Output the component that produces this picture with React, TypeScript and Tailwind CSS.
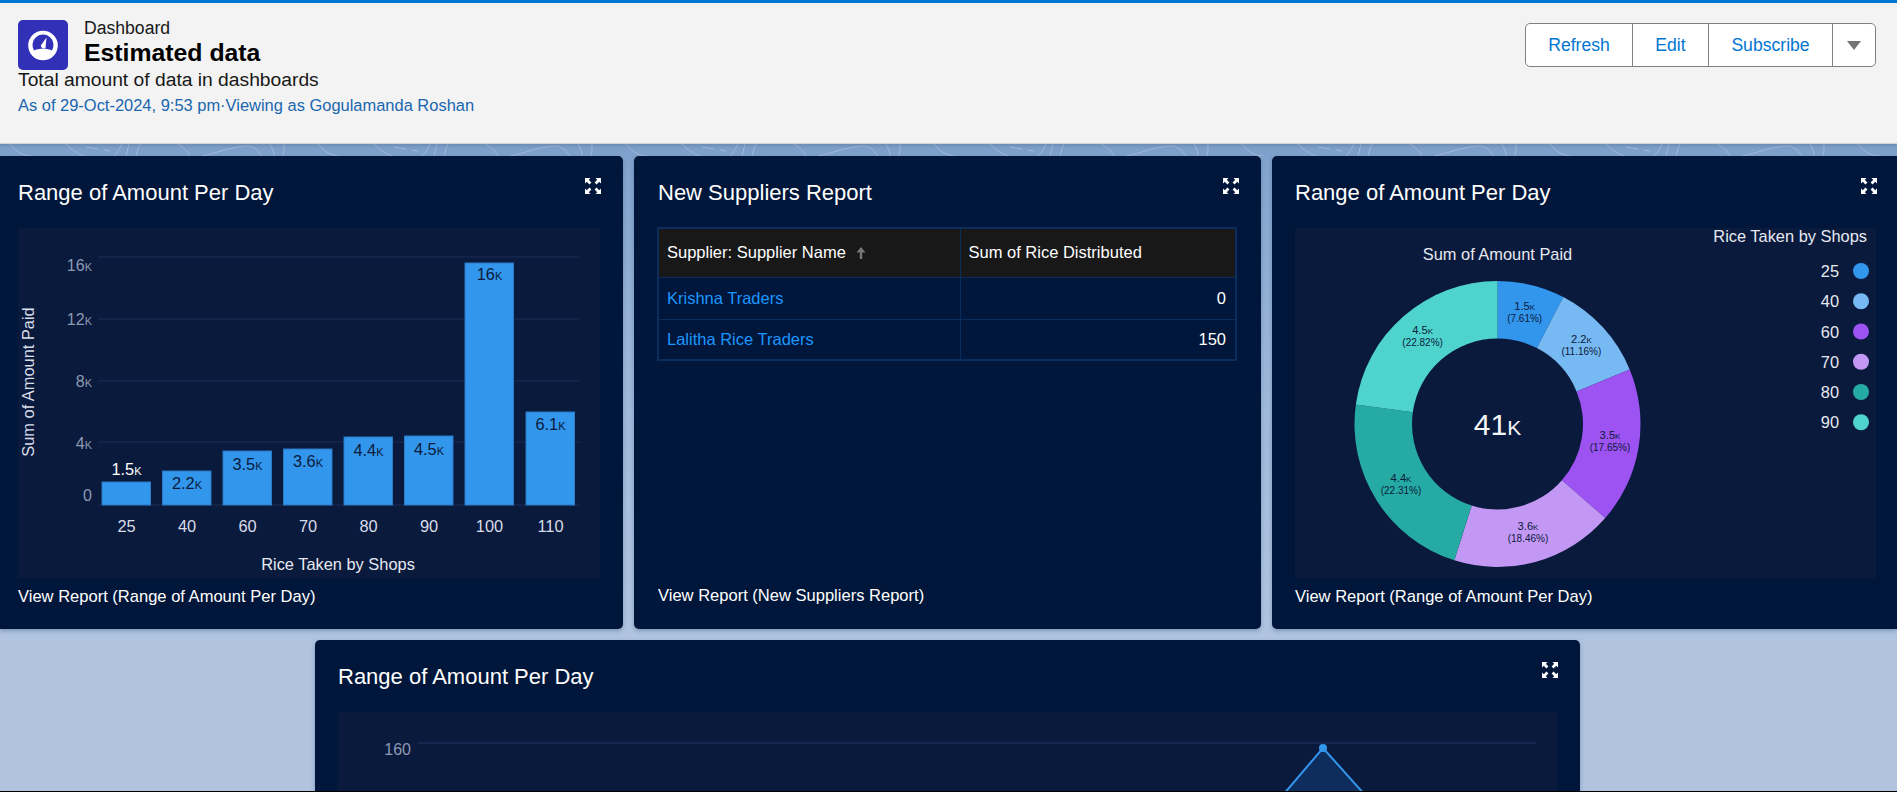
import React from "react";

const bars = [
  { name: "25", x: 102, top: 482, value: "1.5k", labelY: 469, outside: true },
  { name: "40", x: 162.5, top: 471, value: "2.2k", labelY: 483 },
  { name: "60", x: 223, top: 451, value: "3.5k", labelY: 464 },
  { name: "70", x: 283.5, top: 449, value: "3.6k", labelY: 461 },
  { name: "80", x: 344, top: 437, value: "4.4k", labelY: 450 },
  { name: "90", x: 404.5, top: 436, value: "4.5k", labelY: 449 },
  { name: "100", x: 465, top: 263, value: "16k", labelY: 274 },
  { name: "110", x: 526, top: 412, value: "6.1k", labelY: 424 },
];

const yTicks = [
  { label: "16k", line: 257, y: 265 },
  { label: "12k", line: 319, y: 319 },
  { label: "8k", line: 381, y: 381 },
  { label: "4k", line: 442, y: 443 },
  { label: "0", line: 505, y: 495 },
];

const slices = [
  { name: "25", pct: 7.61, color: "#3296ed", value: "1.5k", share: "(7.61%)", x: 1524.7, y: 306 },
  { name: "40", pct: 11.16, color: "#77b9f2", value: "2.2k", share: "(11.16%)", x: 1581.4, y: 339 },
  { name: "60", pct: 17.65, color: "#9d53f2", value: "3.5k", share: "(17.65%)", x: 1610, y: 435 },
  { name: "70", pct: 18.46, color: "#c398f5", value: "3.6k", share: "(18.46%)", x: 1528, y: 526 },
  { name: "80", pct: 22.31, color: "#26aba4", value: "4.4k", share: "(22.31%)", x: 1401, y: 478 },
  { name: "90", pct: 22.82, color: "#4ed4cd", value: "4.5k", share: "(22.82%)", x: 1422.6, y: 330 },
];

const CX = 1497.5;
const CY = 424;

const arcPath = (from: number, to: number, outer: number, inner: number) => {
  const point = (pct: number, r: number) => {
    const a = (pct / 100) * Math.PI * 2;
    return `${CX + Math.sin(a) * r} ${CY - Math.cos(a) * r}`;
  };
  const big = to - from > 50 ? 1 : 0;
  return `M${point(from, outer)} A${outer} ${outer} 0 ${big} 1 ${point(to, outer)} L${point(to, inner)} A${inner} ${inner} 0 ${big} 0 ${point(from, inner)} Z`;
};

const ExpandIcon = () => (
  <svg viewBox="0 0 16 16" className="w-4 h-4" fill="#fff">
    <path d="M0 0h5.5L3.8 1.8l2.6 2.6-2 2-2.6-2.6L0 5.5z" />
    <path d="M16 0v5.5l-1.8-1.7-2.6 2.6-2-2 2.6-2.6L10.5 0z" />
    <path d="M0 16v-5.5l1.8 1.7 2.6-2.6 2 2-2.6 2.6L5.5 16z" />
    <path d="M16 16h-5.5l1.7-1.8-2.6-2.6 2-2 2.6 2.600 1.800-1.700z" />
  </svg>
);

const Card = ({
  title,
  footer,
  className,
  children,
}: {
  title: string;
  footer?: string;
  className: string;
  children: React.ReactNode;
}) => (
  <section className={`flex flex-col shrink-0 bg-[#00163a] text-white shadow-[0_2px_4px_rgba(40,70,120,0.35)] ${className}`}>
    <div className="h-[72px] shrink-0 flex items-start justify-between">
      <h2 className="text-[22px] leading-[26px] mt-6">{title}</h2>
      <button className="mt-[22px] -mr-px">
        <ExpandIcon />
      </button>
    </div>
    {children}
    {footer && <p className="mt-[9px] text-[16.55px] leading-5">{footer}</p>}
  </section>
);

const BarChart = () => (
  <div className="h-[350px] bg-[#0a1a3d]">
    <svg viewBox="18 228 582 350" className="w-full h-full block font-['Liberation_Sans',sans-serif]">
      {yTicks.map((t) => (
        <g key={t.label}>
          <line x1="98" x2="579" y1={t.line} y2={t.line} stroke="#1b2b55" strokeWidth="1.2" />
          <text x="92" y={t.y + 5.5} textAnchor="end" fontSize="16" fill="#8d99b2" className="[font-variant:small-caps]">
            {t.label}
          </text>
        </g>
      ))}
      {bars.map((b) => (
        <g key={b.name}>
          <rect x={b.x} y={b.top} width="48.5" height={505 - b.top} fill="#3296ed" stroke="#2a79c4" strokeWidth="1" />
          <text
            x={b.x + 24.5}
            y={b.labelY + 5.5}
            textAnchor="middle"
            fontSize="16.4"
            fill={b.outside ? "#ffffff" : "#0b1a3a"}
            className="[font-variant:small-caps]"
          >
            {b.value}
          </text>
          <text x={b.x + 24.5} y="532" textAnchor="middle" fontSize="16.4" fill="#d8dde8">
            {b.name}
          </text>
        </g>
      ))}
      <text x="338" y="570" textAnchor="middle" fontSize="16.4" fill="#e6e9f0">
        Rice Taken by Shops
      </text>
      <text transform="translate(34 382) rotate(-90)" textAnchor="middle" fontSize="16.4" fill="#d8dde8">
        Sum of Amount Paid
      </text>
    </svg>
  </div>
);

const SupplierTable = () => (
  <div className="h-[350px] -mt-px">
    <table className="table-fixed border-collapse w-[580px] -ml-px text-[16.5px] border-2 border-[#0a2d5c]">
      <colgroup>
        <col className="w-[302px]" />
        <col />
      </colgroup>
      <thead>
        <tr className="h-[49px] bg-[#181818] text-left">
          <th className="font-normal px-[8px] border border-[#0a2d5c]">
            <span className="inline-flex items-center gap-[10px]">
              Supplier: Supplier Name
              <svg viewBox="0 0 10 14" className="w-[10px] h-[14px]" fill="#777">
                <path d="M5 1l4.500 5.500H6.200V13H3.800V6.500H0.500z" />
              </svg>
            </span>
          </th>
          <th className="font-normal px-[8px] border border-[#0a2d5c]">Sum of Rice Distributed</th>
        </tr>
      </thead>
      <tbody>
        <tr className="h-[42px]">
          <td className="px-[8px] text-[#1b96ff] border border-[#0a2d5c]">Krishna Traders</td>
          <td className="px-[9px] text-right border border-[#0a2d5c]">0</td>
        </tr>
        <tr className="h-[41px]">
          <td className="px-[8px] text-[#1b96ff] border border-[#0a2d5c]">Lalitha Rice Traders</td>
          <td className="px-[9px] text-right border border-[#0a2d5c]">150</td>
        </tr>
      </tbody>
    </table>
  </div>
);

const DonutChart = () => {
  let start = 0;
  return (
    <div className="h-[350px] bg-[#0a1a3d]">
      <svg viewBox="1295 228 581 350" className="w-full h-full block font-['Liberation_Sans',sans-serif]">
        <text x={CX} y="260" textAnchor="middle" fontSize="16.4" fill="#e6e9f0">
          Sum of Amount Paid
        </text>
        {slices.map((s) => {
          const d = arcPath(start, start + s.pct, 143, 85.5);
          start += s.pct;
          return <path key={s.name} d={d} fill={s.color} />;
        })}
        {slices.map((s) => (
          <g key={s.name} textAnchor="middle" fill="#0b1a3a">
            <text x={s.x} y={s.y + 4} fontSize="11.2" className="[font-variant:small-caps]">
              {s.value}
            </text>
            <text x={s.x} y={s.y + 16} fontSize="10">
              {s.share}
            </text>
          </g>
        ))}
        <text x={CX} y="435" textAnchor="middle" fontSize="30" fill="#f2f4f8" className="[font-variant:small-caps]">
          41k
        </text>
        <text x="1867" y="242" textAnchor="end" fontSize="16.4" fill="#e6e9f0">
          Rice Taken by Shops
        </text>
        {slices.map((s, i) => {
          const y = 271 + i * 30.25;
          return (
            <g key={s.name}>
              <text x="1839" y={y + 6} textAnchor="end" fontSize="16.4" fill="#e6e9f0">
                {s.name}
              </text>
              <circle cx="1861" cy={y} r="8" fill={s.color} />
            </g>
          );
        })}
      </svg>
    </div>
  );
};

const LineChart = () => (
  <div className="flex-1 bg-[#0a1a3d]">
    <svg viewBox="338 712 1219 79" className="w-full h-[79px] block font-['Liberation_Sans',sans-serif]">
      <line x1="418" x2="1536" y1="743" y2="743" stroke="#1b2b55" strokeWidth="1.5" />
      <text x="411" y="755" textAnchor="end" fontSize="16" fill="#8d99b2">
        160
      </text>
      <path d="M1283 795L1323 748L1365 795Z" fill="#0f2d5c" />
      <path d="M1283 795L1323 748L1365 795" fill="none" stroke="#3296ed" strokeWidth="2" />
      <circle cx="1323" cy="748" r="4" fill="#3296ed" />
    </svg>
  </div>
);

const BackgroundPattern = () => (
  <svg className="absolute left-0 top-[144px] w-full h-3" aria-hidden="true">
    <defs>
      <pattern id="swirl" width="308" height="12" patternUnits="userSpaceOnUse">
        <g fill="none" stroke="#b9cce4" strokeOpacity="0.55" strokeWidth="1">
          <path d="M10 0C16 8 24 12 32 12" />
          <path d="M66 0C72 6 78 10 84 12" />
          <path d="M86 3l12 2M104 6l6 1" />
          <path d="M114 12C118 8 120 4 122 0" />
          <path d="M126 12C127 8 128 4 129 0" />
          <path d="M136 12C137 8 138 4 140 0" />
          <path d="M178 0C184 4 188 8 190 12" />
          <path d="M202 12C214 10 226 4 246 2C254 2 258 6 262 12" />
          <path d="M270 0C272 4 274 8 274 12" />
          <path d="M284 0C284 4 284 8 283 12" />
        </g>
      </pattern>
    </defs>
    <rect width="100%" height="100%" fill="url(#swirl)" />
  </svg>
);

const App = () => (
  <div className="relative h-[792px] w-full overflow-hidden flex flex-col bg-[linear-gradient(#7a9ec9_140px,#84a5ce_170px,#a0b9da_400px,#b0c4df_620px)] font-['Liberation_Sans',Arial,sans-serif]">
    <div className="h-[144px] shrink-0 relative z-10 bg-[#f3f3f3] border-t-[3px] border-[#0176d3] border-b border-b-[#d8d3cd] shadow-[0_2px_3px_rgba(0,0,0,0.12)] flex justify-between pl-[18px] pr-[21px]">
      <div>
        <div className="flex items-start gap-4 mt-[17px] h-[50px]">
          <svg viewBox="0 0 50 50" className="w-[50px] h-[50px] shrink-0">
            <rect width="50" height="50" rx="5" fill="#3230b6" />
            <circle cx="25" cy="25.5" r="14.8" fill="#fff" />
            <path d="M16 30.5A10.500 10.500 0 1 1 34 30.5C30 28 20 28 16 30.5Z" fill="#3230b6" />
            <path d="M28.5 17.5L22.800 25.500A3 3 0 0 0 27.500 28Z" fill="#fff" />
          </svg>
          <div className="-mt-[3px]">
            <p className="text-[17.6px] leading-[22px] text-[#181818]">Dashboard</p>
            <h1 className="text-[24.8px] leading-[28px] font-bold text-black">Estimated data</h1>
          </div>
        </div>
        <p className="-mt-[2px] text-[19.25px] leading-6 text-[#181818]">Total amount of data in dashboards</p>
        <p className="text-[16.47px] leading-5 mt-[3px] text-[#1a66b0]">As of 29-Oct-2024, 9:53 pm·Viewing as Gogulamanda Roshan</p>
      </div>
      <div className="mt-5 h-[44px] flex bg-white border border-[#808080] rounded-[5px] text-[17.6px] text-[#0176d3]">
        <button className="w-[107px] border-r border-[#808080]">Refresh</button>
        <button className="w-[76px] border-r border-[#808080]">Edit</button>
        <button className="w-[124px] border-r border-[#808080]">Subscribe</button>
        <button className="w-[42px] flex items-center justify-center">
          <svg viewBox="0 0 14 9" className="w-[14px] h-[9px]" fill="#747474">
            <path d="M0 0h14L7 9z" />
          </svg>
        </button>
      </div>
    </div>

    <BackgroundPattern />

    <div className="relative flex-1 min-h-0 overflow-hidden pt-3 flex flex-col gap-[11px]">
      <div className="flex gap-[11px]">
        <Card title="Range of Amount Per Day" footer="View Report (Range of Amount Per Day)" className="w-[623px] h-[473px] pl-[18px] pr-[23px] rounded-r-[5px]">
          <BarChart />
        </Card>
        <Card title="New Suppliers Report" footer="View Report (New Suppliers Report)" className="w-[627px] h-[473px] pl-6 pr-[23px] rounded-[5px]">
          <SupplierTable />
        </Card>
        <Card title="Range of Amount Per Day" footer="View Report (Range of Amount Per Day)" className="w-[625px] h-[473px] pl-[23px] pr-[21px] rounded-l-[5px]">
          <DonutChart />
        </Card>
      </div>
      <div className="ml-[315px]">
        <Card title="Range of Amount Per Day" className="w-[1265px] h-[300px] pl-[23px] pr-[23px] rounded-[5px]">
          <LineChart />
        </Card>
      </div>
    </div>
    <div className="h-px shrink-0 bg-black relative" />
  </div>
);

export default App;
